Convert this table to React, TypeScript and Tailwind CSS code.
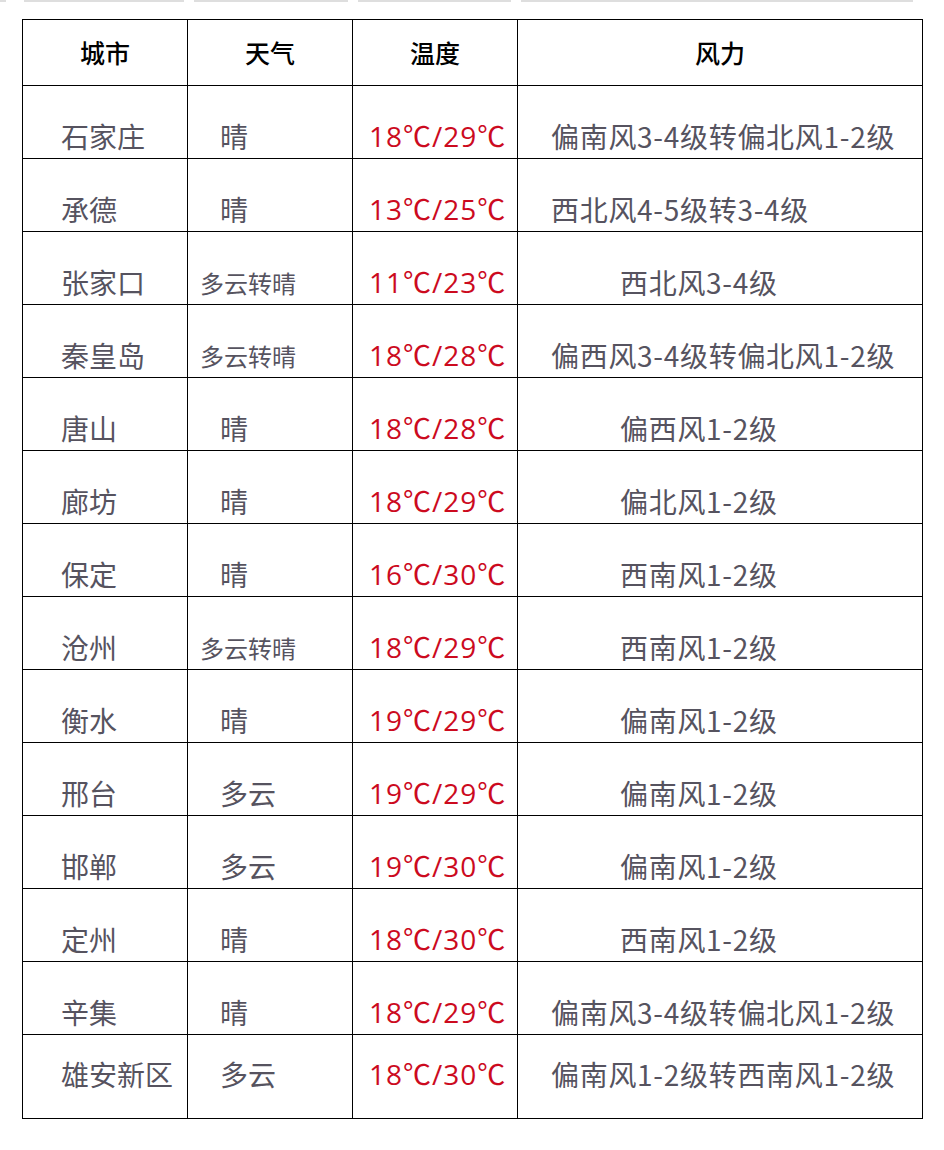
import React from "react";

type Row = { city: string; weather: string; temp: string; wind: string; short?: boolean };

const rows: Row[] = [
  { city: "石家庄", weather: "晴", temp: "18℃/29℃", wind: "偏南风3-4级转偏北风1-2级" },
  { city: "承德", weather: "晴", temp: "13℃/25℃", wind: "西北风4-5级转3-4级" },
  { city: "张家口", weather: "多云转晴", temp: "11℃/23℃", wind: "西北风3-4级", short: true },
  { city: "秦皇岛", weather: "多云转晴", temp: "18℃/28℃", wind: "偏西风3-4级转偏北风1-2级" },
  { city: "唐山", weather: "晴", temp: "18℃/28℃", wind: "偏西风1-2级", short: true },
  { city: "廊坊", weather: "晴", temp: "18℃/29℃", wind: "偏北风1-2级", short: true },
  { city: "保定", weather: "晴", temp: "16℃/30℃", wind: "西南风1-2级", short: true },
  { city: "沧州", weather: "多云转晴", temp: "18℃/29℃", wind: "西南风1-2级", short: true },
  { city: "衡水", weather: "晴", temp: "19℃/29℃", wind: "偏南风1-2级", short: true },
  { city: "邢台", weather: "多云", temp: "19℃/29℃", wind: "偏南风1-2级", short: true },
  { city: "邯郸", weather: "多云", temp: "19℃/30℃", wind: "偏南风1-2级", short: true },
  { city: "定州", weather: "晴", temp: "18℃/30℃", wind: "西南风1-2级", short: true },
  { city: "辛集", weather: "晴", temp: "18℃/29℃", wind: "偏南风3-4级转偏北风1-2级" },
  { city: "雄安新区", weather: "多云", temp: "18℃/30℃", wind: "偏南风1-2级转西南风1-2级" },
];

export default function App() {
  return (
    <div
      className="relative w-[944px] h-[1150px] bg-white overflow-hidden"
      style={{ fontFamily: '"Noto Sans CJK SC", "Noto Sans", sans-serif' }}
    >
      <div className="flex h-[2px] gap-[10px]">
        <div className="w-[6px] bg-[#dedede]" />
        <div className="w-[160px] bg-[#dedede] ml-[8px]" />
        <div className="w-[154px] bg-[#dedede]" />
        <div className="w-[153px] bg-[#dedede]" />
        <div className="w-[392px] bg-[#dedede]" />
      </div>
      <div className="ml-[22px] mt-[17px] w-[901px] border-l border-t border-black grid grid-cols-[165px_165px_165px_405px]">
        {["城市", "天气", "温度", "风力"].map((h) => (
          <div
            key={h}
            className="h-[66px] border-r border-b border-black flex items-center justify-center text-[25px] text-black font-medium"
          >
            {h}
          </div>
        ))}
        {rows.map((r, i) => {
          const last = i === rows.length - 1;
          const cell =
            "border-r border-b border-black flex text-[#56535f] " +
            (last ? "h-[84px] items-center pb-[6px]" : "h-[73px] items-end pb-[1px]");
          const smallW = r.weather.length === 4;
          return (
            <React.Fragment key={r.city}>
              <div className={cell + " pl-[38px] text-[28px]"}>{r.city}</div>
              <div className={cell + (smallW ? " pl-[12px] text-[24px] pb-[3px]" : " pl-[32px] text-[28px]")}>{r.weather}</div>
              <div
                className={cell + " pl-[16px] text-[28px] tracking-[1px] !text-[#cc0a1e]"}
                style={{ fontFamily: '"Open Sans", "Noto Sans CJK SC", sans-serif' }}
              >
                {r.temp}
              </div>
              <div className={cell + (r.short ? " pl-[102px]" : " pl-[33px]") + " text-[28px] tracking-[0.7px]"}>{r.wind}</div>
            </React.Fragment>
          );
        })}
      </div>
    </div>
  );
}
